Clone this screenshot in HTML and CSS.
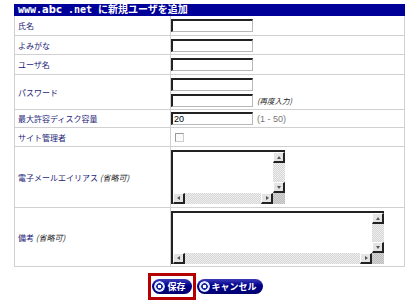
FILE: index.html
```html
<!DOCTYPE html>
<html lang="ja">
<head>
	<meta charset="UTF-8">
	<title>新規ユーザを追加</title>
	<link rel="stylesheet" href="styles.css">
</head>
<body>
	<div class="main">
		<div class="title">www.<b>abc</b> .net に新規ユーザを追加</div>
		<div class="form">
			<div class="row r19">
				<div class="label">氏名</div>
				<div class="field"><input type="text"></div>
			</div>
			<div class="row r19">
				<div class="label">よみがな</div>
				<div class="field"><input type="text"></div>
			</div>
			<div class="row r20">
				<div class="label">ユーザ名</div>
				<div class="field"><input type="text"></div>
			</div>
			<div class="row r35">
				<div class="label">パスワード</div>
				<div class="field">
					<div class="stack">
						<input type="password">
						<div class="line"><input type="password"><span class="note">(再度入力)</span></div>
					</div>
				</div>
			</div>
			<div class="row r18">
				<div class="label">最大許容ディスク容量</div>
				<div class="field"><input type="text" value="20"><span class="range">(1 - 50)</span></div>
			</div>
			<div class="row r19">
				<div class="label">サイト管理者</div>
				<div class="field"><input type="checkbox" class="check"></div>
			</div>
			<div class="row r61">
				<div class="label">電子メールエイリアス <i class="opt">(省略可)</i></div>
				<div class="field">
					<div class="memo small">
						<textarea></textarea>
						<div class="vbar"><span class="sbtn up"></span><span class="track"></span><span class="sbtn down"></span></div>
						<div class="hbar"><span class="sbtn left"></span><span class="track"></span><span class="sbtn right"></span></div>
						<span class="corner"></span>
					</div>
				</div>
			</div>
			<div class="row r60">
				<div class="label">備考 <i class="opt">(省略可)</i></div>
				<div class="field">
					<div class="memo wide">
						<textarea></textarea>
						<div class="vbar"><span class="sbtn up"></span><span class="track"></span><span class="sbtn down"></span></div>
						<div class="hbar"><span class="sbtn left"></span><span class="track"></span><span class="sbtn right"></span></div>
						<span class="corner"></span>
					</div>
				</div>
			</div>
		</div>
		<div class="buttons">
			<div class="focus"><button class="pill"><span class="dot"></span>保存</button></div>
			<button class="pill"><span class="dot"></span>キャンセル</button>
		</div>
	</div>
</body>
</html>
```

FILE: styles.css
```css
body {
	margin: 0;
	background: #fff;
	font-family: "Noto Sans CJK JP", "Noto Sans", sans-serif;
}
.main {
	width: 391px;
	margin: 4px 0 0 14px;
}
.title {
	height: 12px;
	line-height: 12px;
	padding-left: 4px;
	background: #000099;
	color: #fff;
	font-family: "DejaVu Sans Mono", "Noto Sans CJK JP", monospace;
	font-size: 10px;
	font-weight: bold;
	white-space: nowrap;
}
.title b {
	font-family: "DejaVu Sans", sans-serif;
}
.form {
	border: 1px solid #d0d0d0;
	border-top: none;
}
.row {
	display: grid;
	grid-template-columns: 156px 1fr;
	box-sizing: border-box;
	border-top: 1px solid #d0d0d0;
}
.row:first-child {
	border-top: none;
}
.r18 { height: 18px; }
.r19 { height: 19px; }
.r20 { height: 20px; }
.r35 { height: 35px; }
.r60 { height: 59px; }
.r61 { height: 61px; }
.label {
	display: flex;
	align-items: center;
	padding-left: 3px;
	border-right: 1px solid #d0d0d0;
	color: #1c1c78;
	font-size: 8px;
	white-space: pre;
}
.opt {
	color: #222;
}
.field {
	display: flex;
	align-items: center;
	gap: 4px;
}
input[type=text], input[type=password] {
	width: 82px;
	height: 13px;
	margin: 0;
	padding: 0 1px;
	box-sizing: border-box;
	border-style: solid;
	border-width: 2px 1px 1px 2px;
	border-color: #222 #b8b8b8 #b8b8b8 #222;
	background: #fff;
	font-family: "Liberation Sans", sans-serif;
	font-size: 9px;
	outline: none;
}
.stack {
	display: flex;
	flex-direction: column;
	gap: 3px;
}
.line {
	display: flex;
	align-items: center;
	gap: 4px;
}
.note {
	font-size: 7.5px;
	font-style: italic;
	color: #222;
}
.range {
	font-family: "Liberation Sans", sans-serif;
	font-size: 9px;
	color: #777;
}
.check {
	appearance: none;
	width: 9px;
	height: 9px;
	margin: 0 0 0 4px;
	box-sizing: border-box;
	border: 1px solid #999;
	border-right-color: #ccc;
	border-bottom-color: #ccc;
	background: #fafafa;
}
.memo {
	display: grid;
	grid-template-columns: 1fr 12px;
	grid-template-rows: 1fr 11px;
	box-sizing: border-box;
	border-top: 2px solid #222;
	border-left: 2px solid #222;
}
.small {
	width: 114px;
	height: 54px;
}
.wide {
	width: 213px;
	height: 53px;
}
.memo textarea {
	border: none;
	margin: 0;
	padding: 0;
	resize: none;
	overflow: hidden;
	background: #fff;
	outline: none;
}
.vbar {
	display: flex;
	flex-direction: column;
}
.hbar {
	display: flex;
}
.track {
	flex: 1;
	background: repeating-conic-gradient(#d6d6d6 0 25%, #efefef 0 50%) 0 0 / 2px 2px;
}
.corner {
	background: repeating-conic-gradient(#bdbdbd 0 25%, #d4d4d4 0 50%) 0 0 / 2px 2px;
}
.sbtn {
	position: relative;
	width: 12px;
	height: 11px;
	box-sizing: border-box;
	background: #e4e4e4;
	border-style: solid;
	border-width: 1px 2px 2px 1px;
	border-color: #fff #222 #222 #fff;
}
.sbtn::after {
	content: "";
	position: absolute;
	left: 3px;
	top: 2px;
	border: 2px solid transparent;
}
.up::after {
	top: 1px;
	border-bottom: 3px solid #555;
}
.down::after {
	top: 3px;
	border-top: 3px solid #555;
}
.left::after {
	left: 1px;
	border-right: 3px solid #555;
}
.right::after {
	left: 4px;
	border-left: 3px solid #555;
}
.buttons {
	display: flex;
	justify-content: center;
	align-items: center;
	gap: 1px;
	margin-top: 6px;
	margin-left: -8px;
}
.focus {
	display: flex;
	padding: 3px 1px;
	border: 3px solid #b40000;
}
.pill {
	display: flex;
	align-items: center;
	gap: 2px;
	height: 15px;
	margin: 0;
	padding: 0 6px 0 2px;
	border: none;
	border-radius: 8px;
	background: linear-gradient(#3a3ab8, #000088 45%, #000070);
	color: #fff;
	font-family: "Noto Sans CJK JP", sans-serif;
	font-size: 9px;
	font-weight: bold;
	line-height: 15px;
}
.dot {
	width: 11px;
	height: 11px;
	border-radius: 50%;
	background: radial-gradient(circle, #fff 0 1.5px, #1a2a9a 2px 3px, #dfe6ff 3.5px 5px, #6a7ad0 5.5px);
}
```
